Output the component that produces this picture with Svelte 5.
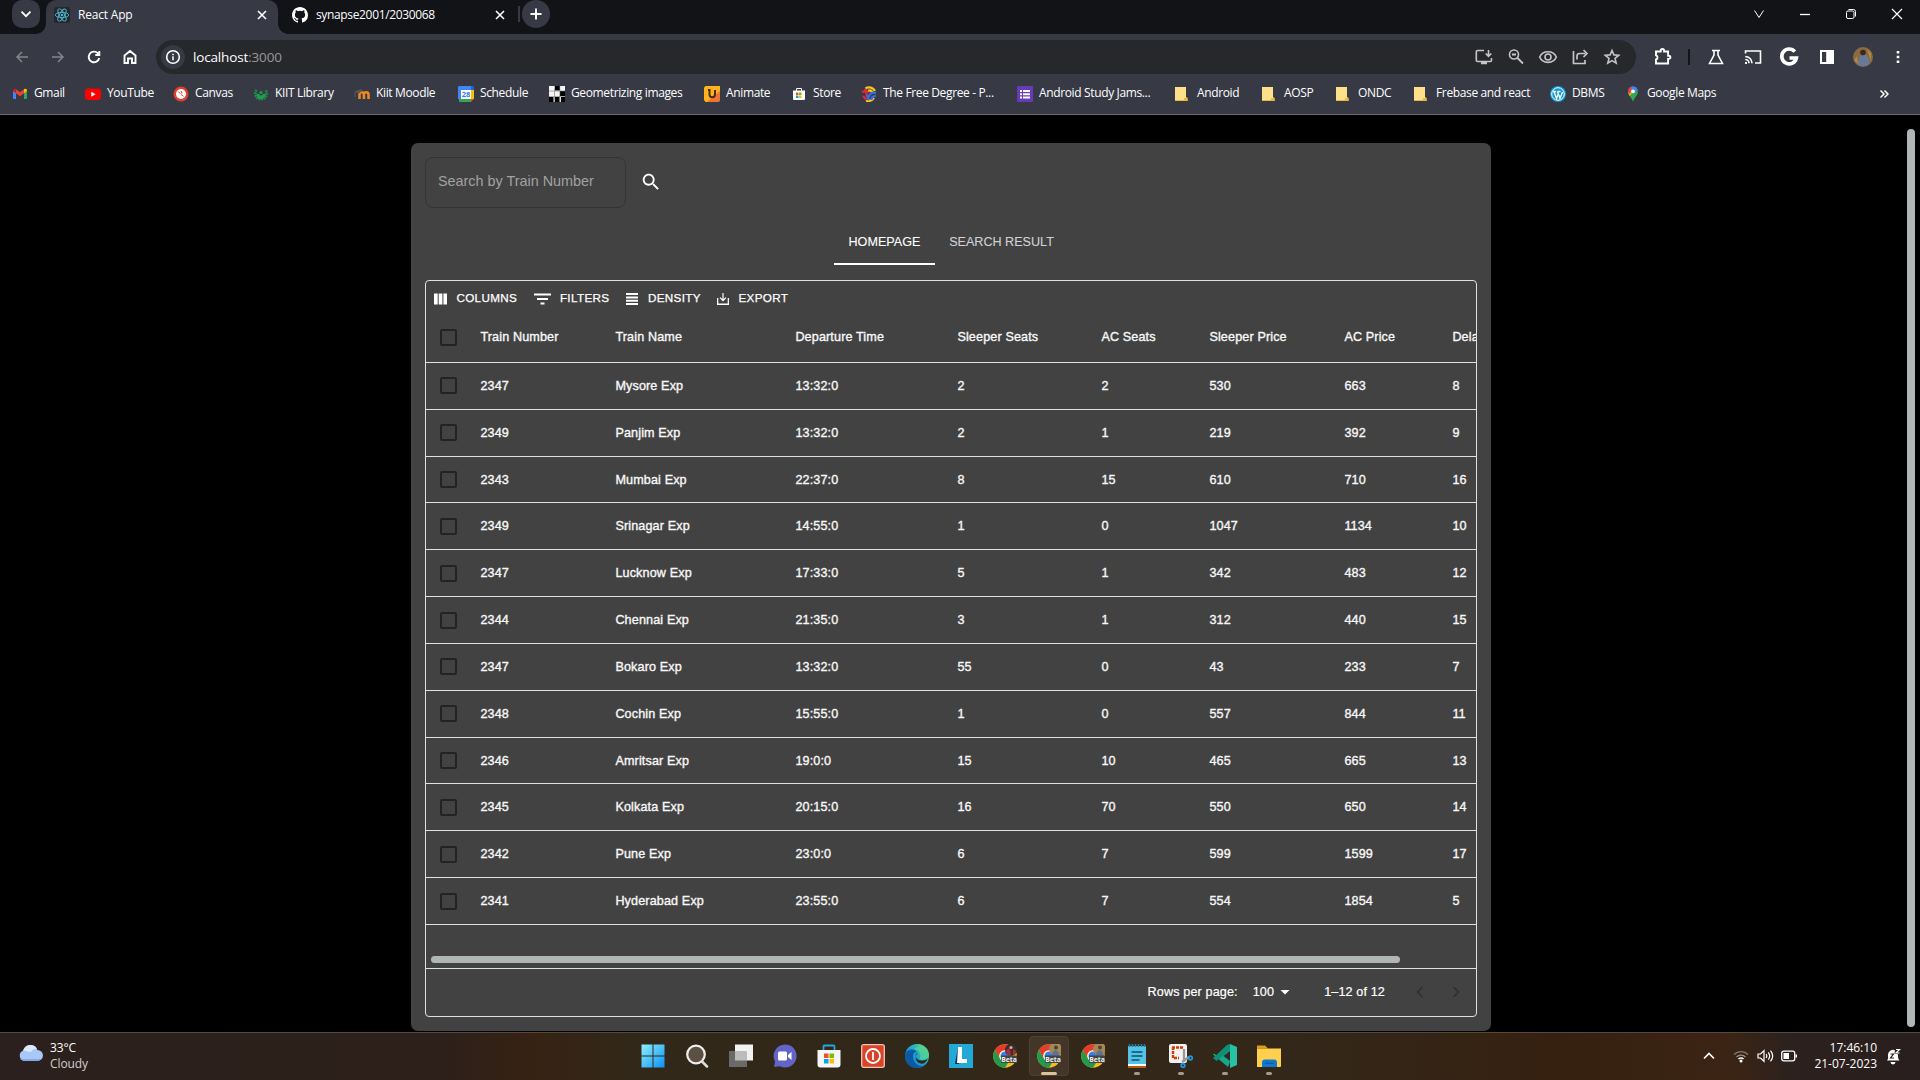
<script>
  const bookmarks = [
    ['gmail', 'Gmail'], ['youtube', 'YouTube'], ['canvas', 'Canvas'], ['kiit', 'KIIT Library'],
    ['moodle', 'Kiit Moodle'], ['calendar', 'Schedule'], ['geo', 'Geometrizing images'],
    ['animate', 'Animate'], ['store', 'Store'], ['degree', 'The Free Degree - P...'],
    ['jams', 'Android Study Jams...'], ['folder', 'Android'], ['folder', 'AOSP'], ['folder', 'ONDC'],
    ['folder', 'Frebase and react'], ['wordpress', 'DBMS'], ['maps', 'Google Maps'],
  ];
  const headers = ['Train Number', 'Train Name', 'Departure Time', 'Sleeper Seats', 'AC Seats', 'Sleeper Price', 'AC Price', 'Delay'];
  const rows = [
    [2347, 'Mysore Exp', '13:32:0', 2, 2, 530, 663, 8],
    [2349, 'Panjim Exp', '13:32:0', 2, 1, 219, 392, 9],
    [2343, 'Mumbai Exp', '22:37:0', 8, 15, 610, 710, 16],
    [2349, 'Srinagar Exp', '14:55:0', 1, 0, 1047, 1134, 10],
    [2347, 'Lucknow Exp', '17:33:0', 5, 1, 342, 483, 12],
    [2344, 'Chennai Exp', '21:35:0', 3, 1, 312, 440, 15],
    [2347, 'Bokaro Exp', '13:32:0', 55, 0, 43, 233, 7],
    [2348, 'Cochin Exp', '15:55:0', 1, 0, 557, 844, 11],
    [2346, 'Amritsar Exp', '19:0:0', 15, 10, 465, 665, 13],
    [2345, 'Kolkata Exp', '20:15:0', 16, 70, 550, 650, 14],
    [2342, 'Pune Exp', '23:0:0', 6, 7, 599, 1599, 17],
    [2341, 'Hyderabad Exp', '23:55:0', 6, 7, 554, 1854, 5],
  ];
  const apps = ['start', 'search', 'taskview', 'chat', 'msstore', 'power', 'edge', 'lapp', 'chrome', 'chromeActive', 'chromeB', 'notepad', 'snip', 'vscode', 'explorer'];
  const running = new Set(['notepad', 'snip', 'vscode', 'explorer']);
</script>

{#snippet favicon(name)}
  <svg width="16" height="16" viewBox="0 0 16 16">
    {#if name === 'gmail'}
      <path fill="#4285f4" d="M1 4.5l3 2.2V13H2a1 1 0 0 1-1-1z" />
      <path fill="#34a853" d="M12 6.7l3-2.2V12a1 1 0 0 1-1 1h-2z" />
      <path fill="#ea4335" d="M4 3.2l4 3 4-3v4L8 10.200 4 7.200z" />
      <path fill="#c5221f" d="M1 4.400C1 2.600 2.800 2.300 4 3.200v4L1 5z" />
      <path fill="#fbbc04" d="M15 4.400C15 2.600 13.200 2.300 12 3.200v4L15 5z" />
    {:else if name === 'youtube'}
      <rect y="2.500" width="16" height="11.500" rx="3" fill="#f00" />
      <path fill="#fff" d="M6.300 5.700v5l4.300-2.500z" />
    {:else if name === 'canvas'}
      <circle cx="8" cy="8" r="7.500" fill="#e13f2b" /><circle cx="8" cy="8" r="5" fill="#fff" />
      <path d="M5.500 6l2 1.500M8 5l1 2.500M8 8.500l2.500 1.800" stroke="#e13f2b" fill="none" />
    {:else if name === 'kiit'}
      <path d="M3.500 4A5.700 5.700 0 1 0 12.500 4" fill="none" stroke="#1f8f4a" stroke-width="2.600" stroke-dasharray="1.800 .7" />
      <path fill="#1f9d4d" d="M3.500 7.500c2 0 3.500 1 4.500 2.500 1-1.500 2.500-2.500 4.500-2.500 0 3.500-2 5.500-4.500 5.500S3.500 11 3.500 7.500z" />
      <circle cx="8" cy="6.500" r="1.500" fill="#1f9d4d" />
    {:else if name === 'moodle'}
      <path d="M5.500 13V8.500a2.200 2.200 0 0 1 4.400 0V13M9.900 13V8.500a2.200 2.200 0 0 1 4.600 0V13" stroke="#f08a24" stroke-width="2.500" fill="none" />
      <path fill="#5b5654" d="M0 5.500L7 3l1.500 2-4 2.500zM.5 6h1v5h-1z" />
    {:else if name === 'calendar'}
      <path fill="#4285f4" d="M1 0h14v4H4v9H0V1z" /><path fill="#fff" d="M3 4h10v9H3z" />
      <path fill="#fbbc04" d="M13 3h3v10h-3z" /><path fill="#34a853" d="M3 13h10v3H1v-3z" /><path fill="#1967d2" d="M13 0h2l1 1v3h-3z" />
      <path fill="#ea4335" d="M13 13h3l-3 3z" />
      <text x="8" y="11" font-size="7.500" text-anchor="middle" fill="#3275e5" font-weight="700">28</text>
    {:else if name === 'geo'}
      <path fill="#f4f4f4" d="M0 0h16v16H0z" /><path d="M6 0h5v4.500H6zM11 5h5v5h-5zM0 11h4.500v5H0zM6 11h4.500v5H6zM12 11h4v5h-4z" /><path d="M5.500 0v16M10.800 0v16M0 5h16M0 10.500h16" stroke="#777" stroke-width=".6" />
    {:else if name === 'animate'}
      <path fill="#ffb31a" d="M1.500 0H16v10L6 16H1.500L0 14V1.500z" /><path fill="#f27432" d="M16 5v9a2 2 0 0 1-2 2H3z" />
      <path d="M4 4h1.500v4.500c0 3.500 5.500 3.500 5.500 0V4" stroke="#4a2a18" stroke-width="2" fill="none" />
    {:else if name === 'store'}
      <path d="M5.500 5V2.500h5V5" stroke="#fff" fill="none" /><path fill="#fff" d="M2 4.500h12V13a1 1 0 0 1-1 1H3a1 1 0 0 1-1-1z" />
      <path fill="#f25022" d="M5 6.500h2.500V9H5z" /><path fill="#7fba00" d="M8 6.500h2.500V9H8z" /><path fill="#00a4ef" d="M5 9.500h2.500V12H5z" /><path fill="#ffb900" d="M8 9.500h2.500V12H8z" />
    {:else if name === 'degree'}
      <g fill="none" stroke-width="2.200"><path stroke="#f5c518" d="M4.500 2.500c3-2 8-1 9.500 2.500M5 15c3 .5 6-.5 8-3M7 5c2-1 4 0 5 2" /><path stroke="#e0283c" d="M1 6c3-2 5 1 4.500 4M1.500 10.500c2 0 3 2 3.500 3.500M3 3.500C5 4 6 5 7 7" /><path stroke="#3b6de0" d="M15 7.500c-3-2-7 0-7 4M10.500 14c0-3 2-4 4.500-4M6 9c0 2 1 4 2 5" /></g>
    {:else if name === 'jams'}
      <rect width="16" height="16" rx="1" fill="#673ab7" />
      <path fill="#fff" d="M3 4h2v2H3zM6 4h7v2H6zM3 7.200h2v2H3zM6 7.200h7v2H6zM3 10.400h2v2H3zM6 10.400h7v2H6z" />
    {:else if name === 'folder'}
      <path fill="#ffe08a" d="M0 1h11v10l1.500 1v3H0z" /><path fill="#e9b93c" d="M0 14h9v1H0zM9 12h3.500v3H9z" />
    {:else if name === 'wordpress'}
      <circle cx="8" cy="8" r="8" fill="#0f9bd0" /><circle cx="8" cy="8" r="6.300" fill="none" stroke="#fff" />
      <path d="M3 5.500h3M7.500 5.500h3M4 5.500l2.500 7L8.200 8M7.500 5.500l2.500 7L12.500 6" stroke="#fff" stroke-width="1.300" fill="none" />
    {:else if name === 'maps'}
      <path fill="#34a853" d="M8 16C7.300 12 3 9.500 3 5.500h10C13 9.500 8.700 12 8 16z" /><path fill="#fbbc04" d="M3.200 7L9 4l-4.200 6z" />
      <path fill="#ea4335" d="M3.300 3.500A5 5 0 0 1 6.500.5L8 5 4 8a5 5 0 0 1-.7-4.500z" /><path fill="#4285f4" d="M6.500.5a5 5 0 0 1 6.500 4.500L9 7 6 3.500z" /><circle cx="8" cy="5.300" r="1.900" fill="#fff" />
    {/if}
  </svg>
{/snippet}

{#snippet app(name)}
  <svg width="24" height="24" viewBox="0 0 24 24">
    {#if name === 'start'}
      <path fill="url(#win)" d="M.5.500h11v11H.5zM12.500.500h11v11h-11zM.5 12.500h11v11H.5zM12.500 12.500h11v11h-11z" />
    {:else if name === 'search'}
      <circle cx="11" cy="10.500" r="8.800" fill="#5c5045" stroke="#eee" stroke-width="2.200" /><path d="M17 17.500l5 5" stroke="#ddd" stroke-width="2.500" stroke-linecap="round" />
    {:else if name === 'taskview'}
      <path fill="#f1f1f1" d="M6 .5h18v16H6z" /><path fill="#6a6a6a" d="M0 7h18v16H0z" /><path fill="#bcbcbc" d="M6 7h12v9.500H6z" />
    {:else if name === 'chat'}
      <path fill="#6264c7" d="M12 .5a11.500 11.500 0 1 1-5 21.800L1 23l1-5.500A11.500 11.500 0 0 1 12 .5z" /><rect x="5" y="7.500" width="9" height="9" rx="1.500" fill="#fff" /><path fill="#fff" d="M15 11l3.500-3v8L15 13z" />
    {:else if name === 'msstore'}
      <path d="M6.500 6V2.500a1 1 0 0 1 1-1h9a1 1 0 0 1 1 1V6" stroke="#20a8e8" stroke-width="1.800" fill="none" /><path fill="#f6f6f6" d="M.5 6h23v14.500a3 3 0 0 1-3 3h-17a3 3 0 0 1-3-3z" />
      <path fill="#f25022" d="M7 9.500h4.500V14H7z" /><path fill="#7fba00" d="M12.500 9.500H17V14h-4.500z" /><path fill="#00a4ef" d="M7 15h4.500v4.500H7z" /><path fill="#ffb900" d="M12.500 15H17v4.500h-4.500z" />
    {:else if name === 'power'}
      <rect x=".7" y=".7" width="22.600" height="22.600" rx="2" fill="#d9432a" stroke="#f3c4b4" stroke-width="1.300" /><circle cx="12" cy="12" r="7" fill="none" stroke="#fff" stroke-width="1.800" /><path d="M12 8v8" stroke="#fff" stroke-width="1.800" />
    {:else if name === 'edge'}
      <circle cx="12" cy="12" r="12" fill="url(#edge)" /><path fill="#0c59a4" d="M0 12c0-6 8-9 12-4-5-1-6 9 1 13 3 2 6 1 8-1-8 8-21 3-21-8z" /><path fill="#332719" d="M13 8.500c-4 1-3 8 4 8 3 0 5-1 6-2.500-1 3-3 5-4.500 5.500C12 21 8 13 13 8.500z" />
      <path fill="#58d78c" d="M12 0c7 0 12 5 12 10.500 0 4-3.500 5.500-7 5.500-2 0-3-1-2-2.500C16 11 15 6 9 5c3-3 8-2 3-5z" opacity=".7" />
    {:else if name === 'lapp'}
      <path fill="#22a9d8" d="M0 0h24v24H0z" /><path fill="#132f55" d="M9 3L6 20h4z" /><path fill="#fff" d="M9 3h4v12h5v4H8z" />
    {:else if name.startsWith('chrome')}
      <circle cx="12" cy="12" r="11.800" fill="#f8bd1a" /><path fill="#e33b2e" d="M1.800 6A11.800 11.800 0 0 1 22.200 6H12a6 6 0 0 0-5.300 8.500z" /><path fill="#229a4a" d="M1.800 6A11.800 11.800 0 0 0 12 23.800l5-8-5 2a6 6 0 0 1-5-3z" />
      <circle cx="12" cy="12" r="5.600" fill="#fff" /><circle cx="12" cy="12" r="4.500" fill="#3b7de9" />
      {#if name === 'chrome'}
        <circle cx="18" cy="6" r="6" fill="#3c2c2c" /><path fill="#a12f3c" d="M13 6l4-2 1 7h-4zM20 5l3 2-1 4h-2z" /><circle cx="18" cy="3.500" r="1.600" fill="#d7a98c" />
      {:else}
        <circle cx="18.500" cy="5" r="6.500" fill="#a58858" /><path fill="#5f7391" d="M15 12c0-7 6-8 8 0z" /><circle cx="19" cy="3.500" r="2" fill="#54402f" />
      {/if}
      <path fill="#414446" d="M8 11.500h16v7.500H8z" /><text x="16" y="17.600" font-size="6.800" font-weight="700" text-anchor="middle" fill="#eee">Beta</text>
    {:else if name === 'notepad'}
      <path fill="#58c2e3" d="M3 2h18v19H3z" /><path fill="#fff" d="M3 20h18v2H3z" /><path fill="#b55a12" d="M3 22h18v2H3z" /><path d="M4.500 0v3M7.500 0v3M10.500 0v3M13.500 0v3M16.500 0v3M19.500 0v3" stroke="#1c81a8" stroke-width="1.500" /><path d="M6.500 8h11M6.500 12h11M6.500 16h8" stroke="#156f91" stroke-width="1.800" />
    {:else if name === 'snip'}
      <rect x="0" y="0" width="18" height="19" rx="2" fill="#f2f2f2" /><path d="M3 3.500h12M4 3v11h6" stroke="#d83b01" stroke-width="2.500" stroke-dasharray="3 1" fill="none" /><path d="M20 13l-7 5M15 5v13" stroke="#999" stroke-width="2.300" /><g fill="none" stroke="#1c9be8" stroke-width="1.700"><circle cx="21.500" cy="14" r="1.800" /><circle cx="14" cy="21.500" r="1.800" /></g>
    {:else if name === 'vscode'}
      <path fill="#17a88b" d="M17 0L4.500 12 1 9.500 0 10.500l15 12.500 2-5z" /><path fill="#0d8f78" d="M0 14l3.500 3L17 6V0L14 1z" /><path fill="#332719" d="M17 7v10l-6.500-5z" /><path fill="#27c2a5" d="M17 0l7 3v18l-7 3z" />
    {:else if name === 'explorer'}
      <path fill="#e59c0c" d="M0 1.500h8l3 3H0z" /><path fill="#ffd04d" d="M0 4.500h24V22a1 1 0 0 1-1 1H0z" /><path fill="#0f78d1" d="M5 23v-4.500a3 3 0 0 1 3-3h9a3 3 0 0 1 3 3V23z" /><path fill="#0b5ea8" d="M8 18.500h9v1.500H8z" />
    {/if}
  </svg>
{/snippet}

<svg class="defs" width="0" height="0">
  <linearGradient id="win" gradientUnits="userSpaceOnUse" x1="0" y1="0" x2="24" y2="24"><stop stop-color="#8ff4fd" /><stop offset="1" stop-color="#0a8df5" /></linearGradient>
  <linearGradient id="edge" x1="0" y1="1" x2="1" y2="0"><stop stop-color="#1470c4" /><stop offset=".5" stop-color="#1ba5d8" /><stop offset="1" stop-color="#62d97c" /></linearGradient>
</svg>

<div class="screen">
  <header class="browser">
    <div class="strip">
      <button class="tabsearch" aria-label="Search tabs"><svg width="12" height="12" viewBox="0 0 12 12"><path d="M1.500 3.700L6 8.200l4.500-4.500" /></svg></button>
      <div class="tab">
        <svg class="react" width="16" height="16" viewBox="0 0 16 16"><rect width="16" height="16" rx="2" fill="#24272b" /><g fill="none" stroke="#4fb5cf" stroke-width=".9"><ellipse cx="8" cy="8" rx="6.800" ry="2.600" /><ellipse cx="8" cy="8" rx="6.800" ry="2.600" transform="rotate(60 8 8)" /><ellipse cx="8" cy="8" rx="6.800" ry="2.600" transform="rotate(120 8 8)" /></g><circle cx="8" cy="8" r="1.300" fill="#4fb5cf" /></svg>
        <span class="title">React App</span>
        <svg class="x" width="10" height="10" viewBox="0 0 10 10"><path d="M1 1l8 8M9 1L1 9" /></svg>
      </div>
      <div class="tab2">
        <svg width="16" height="16" viewBox="0 0 16 16" fill="#fff"><path d="M8 0C3.580 0 0 3.580 0 8c0 3.540 2.290 6.530 5.470 7.590.4.070.55-.17.55-.38 0-.19-.01-.82-.01-1.490-2.010.37-2.530-.49-2.690-.94-.09-.23-.48-.94-.82-1.130-.28-.15-.68-.52-.01-.53.63-.01 1.080.58 1.230.82.72 1.210 1.870.87 2.330.66.070-.52.28-.87.51-1.070-1.780-.2-3.640-.89-3.640-3.950 0-.87.31-1.590.82-2.150-.08-.2-.36-1.020.08-2.120 0 0 .67-.21 2.200.82a7.600 7.600 0 0 1 4 0c1.530-1.040 2.200-.82 2.200-.82.44 1.100.16 1.920.08 2.120.51.56.82 1.270.82 2.150 0 3.070-1.870 3.750-3.650 3.950.29.25.54.73.54 1.480 0 1.070-.01 1.930-.01 2.200 0 .21.15.46.55.38A8 8 0 0 0 16 8c0-4.420-3.580-8-8-8z" /></svg>
        <span class="title">synapse2001/2030068</span>
        <svg class="x" width="10" height="10" viewBox="0 0 10 10"><path d="M1 1l8 8M9 1L1 9" /></svg>
      </div>
      <i class="tabsep"></i>
      <button class="newtab" aria-label="New tab"><svg width="12" height="12" viewBox="0 0 12 12"><path d="M6 .5v11M.5 6h11" /></svg></button>
      <div class="winctl">
        <svg width="12" height="12" viewBox="0 0 12 12"><path d="M1.500 2.500L6 9.500l4.500-7" /></svg>
        <svg width="12" height="12" viewBox="0 0 12 12"><path d="M1 6.500h10" stroke-width="1.300" /></svg>
        <svg width="12" height="12" viewBox="0 0 12 12"><rect x="1.500" y="3" width="7.500" height="7.500" rx="1.500" /><path d="M3.500 1.500h5a2 2 0 0 1 2 2v5" /></svg>
        <svg width="12" height="12" viewBox="0 0 12 12"><path d="M1 1l10 10M11 1L1 11" stroke-width="1.200" /></svg>
      </div>
    </div>

    <div class="toolbar">
      <div class="nav">
        <svg class="dim" width="16" height="16" viewBox="0 0 16 16"><path d="M14 8H3M8 3L3 8l5 5" /></svg>
        <svg class="dim" width="16" height="16" viewBox="0 0 16 16"><path d="M2 8h11M8 3l5 5-5 5" /></svg>
        <svg width="16" height="16" viewBox="0 0 16 16"><path d="M13.200 9A5.300 5.300 0 1 1 11.800 4.200L13 5.500M13.300 2v4h-4" stroke-width="1.900" /></svg>
        <svg width="16" height="16" viewBox="0 0 16 16"><path d="M2.500 6.500L8 2l5.500 4.500V14H10V9.500H6V14H2.500z" stroke-width="1.900" /></svg>
      </div>
      <div class="omnibox">
        <span class="info"><svg width="16" height="16" viewBox="0 0 16 16"><circle cx="8" cy="8" r="6.300" /><path d="M8 7.200v4M8 4.700v1.500" stroke-width="1.500" /></svg></span>
        <span class="url">localhost<em>:3000</em></span>
        <div class="omni-icons">
          <svg width="20" height="20" viewBox="0 0 20 20"><path d="M10 3.500H3.500A1.200 1.200 0 0 0 2.300 4.700v8.600a1.200 1.200 0 0 0 1.200 1.200h12.800a1.200 1.200 0 0 0 1.200-1.200V11M14.500 3v5.500M11.700 6.500l2.800 2.800 2.800-2.800" /><path d="M7 16h6" stroke-width="2.500" /></svg>
          <svg width="18" height="18" viewBox="0 0 18 18"><circle cx="7" cy="6.500" r="4.500" /><path d="M10.500 10L16 15.500M5 6.500h4" stroke-width="1.800" /></svg>
          <svg width="20" height="20" viewBox="0 0 20 20"><path d="M1.700 10C4.500 2.900 15.500 2.900 18.300 10 15.500 17.100 4.500 17.100 1.700 10z" /><circle cx="10" cy="10" r="3" /></svg>
          <svg width="18" height="18" viewBox="0 0 18 18"><path d="M2.500 3v12.500h11.500V12M6 11.500V8a2.500 2.500 0 0 1 2.500-2.500h6M12.500 2l3.500 3.500L12.500 9" stroke-width="1.700" /></svg>
          <svg width="18" height="18" viewBox="0 0 18 18"><path d="M9 2.500l1.900 4.400 4.800.4-3.700 3.100 1.200 4.700L9 12.600l-4.200 2.500L6 10.400 2.300 7.300l4.800-.4z" /></svg>
        </div>
      </div>
      <div class="ext">
        <svg width="20" height="20" viewBox="0 0 20 20"><path d="M3 4.500h4.700V3.700a1.700 1.700 0 0 1 3.400 0v.8h4v4.200h.7a1.600 1.600 0 0 1 0 3.200h-.7V16.500H3v-4a2.200 2.200 0 0 0 0-4.200z" stroke-width="1.900" /></svg>
        <i></i>
        <svg width="18" height="18" viewBox="0 0 18 18"><path d="M5 2.500h8M7 2.500V7l-4.500 8.500h13L11 7V2.500" /></svg>
        <svg width="20" height="20" viewBox="0 0 20 20"><path d="M2.500 6.500V4h15v12H12M2.300 9.500a6.800 6.800 0 0 1 6.700 6.800M2.300 12.500a3.700 3.700 0 0 1 3.700 3.700" /><path d="M2 15h2v2H2z" stroke="none" fill="#fff" /></svg>
        <svg width="20" height="20" viewBox="0 0 20 20"><path d="M15.800 4.600A7.400 7.400 0 1 0 17.400 11H10.500" stroke-width="3.600" /></svg>
        <svg width="18" height="18" viewBox="0 0 18 18"><path d="M3 3h12v12H3z" stroke-width="2" /><path d="M9 3h6v12H9z" fill="#fff" /></svg>
        <svg width="20" height="20" viewBox="0 0 20 20" class="avatar"><circle cx="10" cy="10" r="10" fill="#8a6a41" /><path d="M5 18c0-7 2-10 6-10s5 4 5 9a10 10 0 0 1-11 1z" fill="#68799c" /><circle cx="10" cy="5.500" r="2.800" fill="#38281f" /><path d="M1 13l4 4-1-8zM14 2l4 4v8z" fill="#b48a3e" /></svg>
        <svg width="16" height="16" viewBox="0 0 16 16"><path d="M6.700 2h2.600v2.600H6.700zM6.700 6.700h2.600v2.600H6.700zM6.700 11.400h2.600V14H6.700z" fill="#fff" stroke="none" /></svg>
      </div>
    </div>

    <nav class="bookmarks">
      {#each bookmarks as [icon, label]}
        <span class="bm">{@render favicon(icon)}<b>{label}</b></span>
      {/each}
      <svg class="more" width="10" height="10" viewBox="0 0 10 10"><path d="M1.500 1.500L5 5 1.500 8.500M5.500 1.500L9 5 5.500 8.500" /></svg>
    </nav>
  </header>

  <div class="page">
    <main class="card">
      <div class="searchrow">
        <div class="field">Search by Train Number</div>
        <svg width="22" height="22" viewBox="0 0 24 24"><path fill="#fff" d="M15.500 14h-.79l-.28-.27C15.410 12.590 16 11.110 16 9.500 16 5.910 13.090 3 9.500 3S3 5.910 3 9.500 5.910 16 9.500 16c1.610 0 3.090-.59 4.230-1.570l.27.28v.79l5 4.990L20.490 19l-4.990-5zm-6 0C7.010 14 5 11.990 5 9.500S7.010 5 9.500 5 14 7.010 14 9.500 11.990 14 9.500 14z" /></svg>
      </div>
      <div class="tabs"><span class="on">HOMEPAGE</span><span>SEARCH RESULT</span></div>
      <section class="grid">
        <div class="tools">
          <span><svg width="13" height="12" viewBox="0 0 13 12"><path d="M0 .5h3.700v11H0zM4.700.500h3.700v11H4.700zM9.400.500H13v11H9.400z" /></svg>COLUMNS</span>
          <span><svg width="17" height="12" viewBox="0 0 17 12"><path d="M0 .5h17v2H0zM3 5h11v2H3zM6.500 9.500h4v2h-4z" /></svg>FILTERS</span>
          <span><svg width="12" height="12" viewBox="0 0 12 12"><path d="M0 0h12v2H0zM0 3.400h12v2H0zM0 6.700h12v2H0zM0 10h12v2H0z" /></svg>DENSITY</span>
          <span><svg width="12" height="12" viewBox="0 0 12 12"><path d="M0 5h1.300v5.500h9.400V5H12v7H0zM5.400 0h1.200v6l1.900-1.800.9.9L6 8.500 2.600 5.100l.9-.9L5.400 6z" /></svg>EXPORT</span>
        </div>
        <div class="row head"><i class="check"></i>{#each headers as h}<span>{h}</span>{/each}</div>
        {#each rows as r}
          <div class="row"><i class="check"></i>{#each r as c}<span>{c}</span>{/each}</div>
        {/each}
        <div class="hscroll"><i></i></div>
        <footer>
          <span>Rows per page:</span>
          <span class="num">100</span>
          <svg class="caret" width="10" height="5" viewBox="0 0 10 5"><path fill="#fff" d="M.5 0h9L5 4.500z" /></svg>
          <span class="range">1–12 of 12</span>
          <svg class="pg" width="8" height="12" viewBox="0 0 8 12"><path d="M6.500 1L1.500 6l5 5" /></svg>
          <svg class="pg" width="8" height="12" viewBox="0 0 8 12"><path d="M1.500 1l5 5-5 5" /></svg>
        </footer>
      </section>
    </main>
    <i class="vscroll"></i>
  </div>

  <div class="taskbar">
    <div class="weather">
      <svg width="26" height="18" viewBox="0 0 26 18"><path fill="#a9c8f7" d="M6 17a5.500 5.500 0 0 1-.7-10.500C6.500 3 9 1 12.500 1c3.800 0 6 2 6.900 5A5.500 5.500 0 0 1 19.500 17z" /><path fill="#dce9fd" d="M5 7c1-4 4-6 7.500-6 3 0 5 1 6.500 4-4-1-5 3-7 3S8 6 5 7z" /><path fill="#7fabee" d="M2 15h21l-3 2H6z" /></svg>
      <div><p>33°C</p><p class="soft">Cloudy</p></div>
    </div>
    <div class="apps">
      {#each apps as a}
        <span class="app" class:active={a === 'chromeActive'} class:run={running.has(a)}>{@render app(a)}</span>
      {/each}
    </div>
    <div class="tray">
      <svg width="12" height="12" viewBox="0 0 12 12"><path d="M1 8.500L6 3.500l5 5" stroke-width="1.600" /></svg>
      <svg class="wifi" width="16" height="14" viewBox="0 0 16 14"><path d="M1 5.500a10 10 0 0 1 14 0" opacity=".4" /><path d="M3.500 8a6.400 6.400 0 0 1 9 0" opacity=".5" /><path d="M5.500 10a3.500 3.500 0 0 1 5 0" stroke-width="1.500" /><circle cx="8" cy="12" r="1.500" fill="#fff" stroke="none" /></svg>
      <svg class="vol" width="17" height="14" viewBox="0 0 17 14"><path d="M1 5h2.500L7 1.700v10.600L3.500 9H1zM9 5q1.600 2 0 4M11.200 3.300q3 3.700 0 7.400M13.500 1.700q4.400 5.300 0 10.600" stroke-width="1.200" /></svg>
      <svg class="bat" width="17" height="12" viewBox="0 0 17 12"><rect x=".7" y="1.200" width="13" height="9.600" rx="2" stroke-width="1.300" /><path d="M2.500 3h5.500v6H2.500zM14.500 4.500H16v3h-1.500z" fill="#fff" stroke="none" /></svg>
      <div class="clock"><p>17:46:10</p><p>21-07-2023</p></div>
      <svg class="bell" width="15" height="17" viewBox="0 0 15 17"><path fill="#fff" stroke="none" d="M1 12.500C2.500 11 2 9 2 7a5 5 0 0 1 7-4.700L8.500 6H11l1 .5c0 3 0 4.500 1.500 6zM4.500 14h5a2.500 2.500 0 0 1-5 0z" /><path d="M4.500 6h3l-3 4h3.500" stroke="#2a1f1d" stroke-width="1.200" /><path d="M10 1.500h3.500L10 5h3.500" stroke-width="1.200" /></svg>
    </div>
  </div>
</div>

<style>
  :global(body) { margin: 0; background: #000; overflow: hidden; }
  .defs { position: absolute; }
  svg { display: block; flex: none; }
  p { margin: 0; }
  button { border: 0; padding: 0; display: flex; align-items: center; justify-content: center; }
  .screen { width: 1920px; height: 1080px; display: flex; flex-direction: column; overflow: hidden; font-family: 'Open Sans', sans-serif; font-size: 12px; color: #fff; }

  .browser { height: 114px; background: #373944; border-bottom: 1px solid #6a6b70; flex: none; }
  .strip { height: 34px; background: #121317; display: flex; align-items: flex-start; }
  .strip svg path, .strip .winctl rect { stroke: #fff; fill: none; }
  .strip .tab2 > svg:first-child path { fill: #fff; stroke: none; }
  .tabsearch { width: 28px; height: 28px; margin-left: 12px; border-radius: 10px; background: #373944; }
  .tabsearch path { stroke-width: 1.8; }
  .tab { position: relative; margin-left: 6px; width: 232px; height: 34px; box-sizing: border-box; padding: 0 11px 5px 8px; background: #373944; border-radius: 10px 10px 0 0; display: flex; align-items: center; }
  .tab::before, .tab::after { content: ''; position: absolute; bottom: 0; width: 10px; height: 10px; }
  .tab::before { left: -10px; background: radial-gradient(circle at 0 0, transparent 9.5px, #373944 10px); }
  .tab::after { right: -10px; background: radial-gradient(circle at 100% 0, transparent 9.5px, #373944 10px); }
  .title { margin-left: 8px; letter-spacing: -0.35px; white-space: nowrap; }
  .tab .title { letter-spacing: -0.2px; }
  .x { margin-left: auto; }
  .x path { stroke-width: 1.6; }
  .tab2 { width: 213px; height: 29px; margin-left: 14px; display: flex; align-items: center; }
  .tabsep { width: 2px; height: 16px; margin: 6px 0 0 13px; background: #373944; }
  .newtab { width: 28px; height: 28px; margin-left: 2px; border-radius: 14px; background: #373944; }
  .newtab path { stroke-width: 2; }
  .winctl { margin-left: auto; display: flex; gap: 34px; padding: 8px 17px 0 0; }

  .toolbar { height: 46px; display: flex; align-items: center; }
  .toolbar svg { fill: none; stroke: #fff; stroke-width: 1.6; }
  .nav { display: flex; padding-left: 4px; }
  .nav svg { margin: 0 10px; }
  .nav .dim { stroke: #85868d; stroke-width: 1.5; }
  .omnibox { margin-left: 8px; width: 1480px; height: 34px; border-radius: 17px; background: #26282b; display: flex; align-items: center; box-sizing: border-box; padding: 0 8px 0 5px; }
  .info { width: 24px; height: 24px; border-radius: 12px; background: #373944; display: flex; align-items: center; justify-content: center; }
  .url { margin-left: 8px; font-size: 13.5px; letter-spacing: -0.16px; }
  .url em { font-style: normal; color: #96989d; }
  .omni-icons { margin-left: auto; display: grid; grid-template-columns: repeat(5, 32px); place-items: center; }
  .omni-icons svg { stroke: #c3c5c9; }
  .ext { display: grid; grid-template-columns: 36px 15px 39px 36px 36px 40px 32px 38px; place-items: center; padding-left: 9px; }
  .ext i { width: 2px; height: 16px; background: #141519; }
  .toolbar .avatar { stroke: none; }

  .bookmarks { height: 34px; padding: 0 0 7px 12px; box-sizing: border-box; display: grid; align-items: center; grid-template-columns: 73px 88px 80px 101px 104px 91px 155px 87px 70px 156px 158px 87px 74px 78px 136px 75px 1fr 41px; }
  .bm { display: flex; align-items: center; gap: 6px; white-space: nowrap; }
  .bm b { font-weight: 400; letter-spacing: -0.36px; line-height: 16px; padding-bottom: 1px; }
  .bookmarks .more { fill: none; stroke: #fff; stroke-width: 1.5; }

  .page { flex: 1; min-height: 0; background: #000; display: flex; justify-content: space-between; font-family: 'Liberation Sans', Arial, sans-serif; font-size: 12.6px; }
  .card { margin: 28px 0 0 411px; width: 1080px; height: 888px; box-sizing: border-box; padding: 14px 14px 14px 14.4px; background: #424242; border-radius: 7px; }
  .vscroll { width: 8px; height: 898px; margin: 14px 5px 0 0; border-radius: 4px; background: #b0b5b6; }
  .searchrow { display: flex; align-items: center; height: 51px; gap: 14px; }
  .searchrow svg { margin-bottom: 1px; }
  .field { width: 201px; height: 51px; box-sizing: border-box; border: 1px solid #343434; border-radius: 8px; padding: 0 11.5px 3px; display: flex; align-items: center; font-size: 14.4px; color: #a1a1a1; white-space: nowrap; }
  .tabs { display: flex; justify-content: center; height: 43px; margin-top: 14px; }
  .tabs span { box-sizing: border-box; padding: 13px 14.4px 0; border-bottom: 2px solid transparent; line-height: 14px; color: #d0d2d5; -webkit-text-stroke: 0.1px; }
  .tabs .on { color: #fff; border-color: #fff; }
  .grid { margin-top: 15px; height: 737px; box-sizing: border-box; border: 1px solid #e0e0e0; border-radius: 4px; overflow: hidden; letter-spacing: 0.01071em; }
  .tools { height: 31px; display: grid; grid-template-columns: 99.5px 92.500px 90.500px 100px; padding-left: 8px; font-size: 11.7px; letter-spacing: 0.02857em; -webkit-text-stroke: 0.25px; }
  .tools span { display: flex; align-items: center; gap: 9px; line-height: 33px; height: 33px; }
  .tools span:nth-child(n + 3) { gap: 9.5px; }
  .tools svg { fill: #fff; margin-top: 3px; }
  .row { display: grid; grid-template-columns: 45px 135px 180px 162px 144px 108px 135px 108px 108px; height: 46.83px; box-sizing: border-box; border-bottom: 1px solid #e0e0e0; align-items: center; color: #f8f8f8; -webkit-text-stroke: 0.35px; }
  .row.head { height: 51px; }
  .row span { padding-left: 9px; white-space: nowrap; }
  .check { width: 17px; height: 17px; box-sizing: border-box; border: 2px solid #232323; border-radius: 2px; justify-self: center; }
  .hscroll { height: 44px; box-sizing: border-box; border-bottom: 1px solid #e0e0e0; display: flex; align-items: flex-end; padding: 0 0 5px 5px; }
  .hscroll i { width: 969px; height: 7px; border-radius: 4px; background: #b0b5b6; }
  footer { display: flex; align-items: center; height: 46px; justify-content: flex-end; padding-right: 16px; -webkit-text-stroke: 0.2px; }
  .num { margin-left: 15px; }
  .caret { margin: 2px 0 0 6px; }
  .range { margin: 0 31px 0 34px; }
  .pg { fill: none; stroke: #303030; stroke-width: 1.7; }
  .pg + .pg { margin-left: 28px; }

  .taskbar { height: 48px; box-sizing: border-box; flex: none; border-top: 1px solid #514b47; display: grid; grid-template-columns: 631px 660px 1fr; background: linear-gradient(90deg, #2b201d 0, #2d201a 440px, #362213 530px, #312819 640px, #332719 1300px, #36200f 1580px, #3b2414 1730px, #2c211e 1790px, #281e1d 100%); }
  .weather { display: flex; align-items: center; padding: 0 0 2px 18px; gap: 6px; line-height: 16px; font-size: 12px; letter-spacing: -0.1px; }
  .weather svg { margin-top: -5px; }
  .soft { color: #d2cecc; }
  .apps { display: grid; grid-template-columns: repeat(15, 44px); align-items: center; padding-bottom: 1px; }
  .app { position: relative; width: 40px; height: 40px; margin-left: 2px; box-sizing: border-box; display: flex; align-items: center; justify-content: center; border-radius: 4px; }
  .app.active { background: #433629; border: 1px solid #4d4135; }
  .app.run::after, .app.active::after { content: ''; position: absolute; bottom: 1px; width: 6px; height: 3px; border-radius: 2px; background: #a39c92; }
  .app.active::after { width: 16px; background: #dcc199; bottom: 0; }
  .tray { display: flex; align-items: center; justify-content: flex-end; padding: 0 19px 1px 0; }
  .tray svg { fill: none; stroke: #fff; stroke-width: 1.3; }
  .wifi { margin-left: 18px; }
  .vol { margin-left: 8px; }
  .bat { margin-left: 7px; }
  .clock { margin: 0 9px 0 16px; text-align: right; line-height: 16px; }
</style>
